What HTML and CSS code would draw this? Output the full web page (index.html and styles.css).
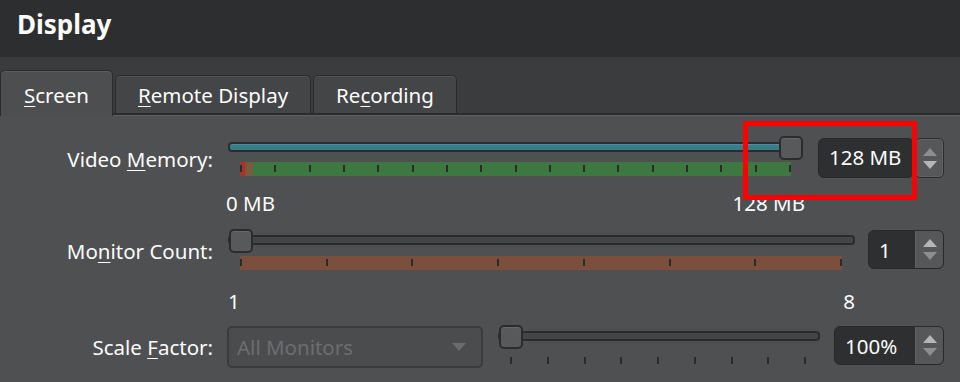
FILE: index.html
```html
<!DOCTYPE html>
<html lang="en">
<head>
    <meta charset="UTF-8">
    <title>Display</title>
    <link rel="stylesheet" href="styles.css">
</head>
<body>
    <div class="header">
        <h1 class="title">Display</h1>
    </div>

    <div class="tabbar">
        <div class="tab tab-active"><u>S</u>creen</div>
        <div class="tab"><u>R</u>emote Display</div>
        <div class="tab">Re<u>c</u>ording</div>
    </div>

    <div class="panel">
        <div class="row row-memory">
            <label class="field-label">Video <u>M</u>emory:</label>
            <div class="slider">
                <div class="groove groove-filled"></div>
                <div class="handle handle-max"></div>
                <div class="scale scale-memory">
                    <span class="tick"></span><span class="tick"></span><span class="tick"></span>
                    <span class="tick"></span><span class="tick"></span><span class="tick"></span>
                    <span class="tick"></span><span class="tick"></span><span class="tick"></span>
                    <span class="tick"></span><span class="tick"></span><span class="tick"></span>
                    <span class="tick"></span><span class="tick"></span><span class="tick"></span>
                    <span class="tick"></span><span class="tick"></span>
                </div>
            </div>
            <div class="spin spin-memory">
                <div class="spin-value">128 MB</div>
                <div class="spin-buttons spin-buttons-split">
                    <span class="arrow-up arrow-off"></span>
                    <span class="arrow-down"></span>
                </div>
            </div>
            <div class="highlight"></div>
        </div>
        <div class="range range-memory"><span>0 MB</span><span>128 MB</span></div>

        <div class="row row-monitors">
            <label class="field-label">Mo<u>n</u>itor Count:</label>
            <div class="slider">
                <div class="groove"></div>
                <div class="handle"></div>
                <div class="scale scale-monitors">
                    <span class="tick"></span><span class="tick"></span><span class="tick"></span>
                    <span class="tick"></span><span class="tick"></span><span class="tick"></span>
                    <span class="tick"></span><span class="tick"></span>
                </div>
            </div>
            <div class="spin spin-monitors">
                <div class="spin-value">1</div>
                <div class="spin-buttons">
                    <span class="arrow-up"></span>
                    <span class="arrow-down arrow-off"></span>
                </div>
            </div>
        </div>
        <div class="range range-monitors"><span>1</span><span>8</span></div>

        <div class="row row-scale">
            <label class="field-label">Scale <u>F</u>actor:</label>
            <div class="combo">
                <span>All Monitors</span>
                <span class="combo-arrow"></span>
            </div>
            <div class="slider slider-scale">
                <div class="groove"></div>
                <div class="handle"></div>
                <div class="scale scale-plain">
                    <span class="tick"></span><span class="tick"></span><span class="tick"></span>
                    <span class="tick"></span><span class="tick"></span><span class="tick"></span>
                    <span class="tick"></span><span class="tick"></span><span class="tick"></span>
                </div>
            </div>
            <div class="spin spin-scale">
                <div class="spin-value">100%</div>
                <div class="spin-buttons">
                    <span class="arrow-up"></span>
                    <span class="arrow-down arrow-off"></span>
                </div>
            </div>
        </div>
    </div>
</body>
</html>
```

FILE: styles.css
```css
body {
    margin: 0;
    font-family: "Noto Sans", "Open Sans", sans-serif;
    font-size: 20.5px;
    color: #fcfcfc;
    background-color: #4f5052;
    overflow: hidden;
}

u { text-decoration-thickness: 1px; text-underline-offset: 3px; }

.header {
    height: 57px;
    box-sizing: border-box;
    padding: 7px 17px 0;
    background-color: #2d2e30;
}

.title {
    margin: 0;
    font-size: 26px;
    line-height: 34px;
    font-weight: bold;
}

/* Tabs */
.tabbar {
    height: 56px;
    display: flex;
    align-items: flex-end;
    gap: 2px;
    background-color: #3b3c3e;
}

.tab {
    height: 38px;
    box-sizing: border-box;
    padding: 2px 22px 0;
    line-height: 34px;
    background-color: #444547;
    border: 1px solid #2a2b2d;
    border-bottom: none;
    border-radius: 5px 5px 0 0;
    box-shadow: inset 0 1px 0 #525355;
}

.tab-active {
    height: 46px;
    padding: 7px 23px 0;
    margin-bottom: -3px;
    position: relative;
    z-index: 1;
    background-color: #4d4e50;
    box-shadow: inset 0 1px 0 #5b5c5e;
}

/* Panel */
.panel {
    border-top: 2px solid #2b2c2e;
    border-left: 1px solid #5a5b5d;
    box-shadow: inset 0 1px 0 #5f6062;
    padding: 21px 16px 20px 0;
    margin-left: -1px;
}

.row {
    display: flex;
    align-items: flex-start;
    position: relative;
}

.field-label {
    width: 213px;
    flex: none;
    text-align: right;
    line-height: 28px;
    margin-right: 15px;
}

.row-memory .field-label { margin-top: 9px; }
.row-monitors .field-label { margin-top: 8px; }
.row-scale .field-label { margin-top: 8px; }

/* Sliders */
.slider {
    flex: 1;
    position: relative;
    height: 40px;
}

.groove {
    margin-top: 6px;
    height: 10px;
    box-sizing: border-box;
    border: 2px solid #2b2c2e;
    border-radius: 4px;
    background-color: #444547;
}

.groove-filled {
    background-color: #3a7c88;
    box-shadow: inset 0 1px 0 #4b919c;
}

.handle {
    position: absolute;
    top: 0;
    left: 1px;
    width: 24px;
    height: 24px;
    box-sizing: border-box;
    border: 2px solid #2b2c2e;
    border-radius: 5px;
    background-color: #58595b;
    box-shadow: inset 0 1px 0 #67686a;
}

.handle-max { left: auto; right: 0; }

.scale {
    margin: 10px 12px 0;
    height: 14px;
    display: flex;
    justify-content: space-between;
}

.tick {
    width: 2px;
    height: 7px;
    margin-top: 3px;
    background-color: #2a2b2d;
}

.scale-memory {
    background: linear-gradient(to right, #a3362a 0, #a3362a 5px, #7d5a3e 6px, #7d5a3e 12px, #3c783f 13px);
}

.scale-monitors {
    margin-top: 11px;
    margin-right: 13px;
    background-color: #7b4f3c;
}

.scale-plain { margin-top: 13px; margin-right: 14px; }

.slider-scale { margin-left: 15px; }

/* Spin boxes */
.spin {
    flex: none;
    display: flex;
    height: 40px;
    box-sizing: border-box;
    margin-top: 2px;
    background-color: #2e2f31;
    border: 1px solid #28292b;
    border-radius: 6px;
}

.spin-value {
    flex: 1;
    padding-left: 10px;
    line-height: 38px;
}

.spin-buttons {
    width: 27px;
    display: flex;
    flex-direction: column;
    align-items: center;
    justify-content: center;
    gap: 5px;
    background-color: #565759;
    border-left: 1px solid #606163;
    border-radius: 0 5px 5px 0;
}

.spin-memory {
    width: 126px;
    margin-left: 15px;
    background: none;
    border: none;
    gap: 1px;
}

.spin-memory .spin-value {
    background-color: #2e2f31;
    border: 1px solid #28292b;
    border-radius: 6px;
    line-height: 36px;
}

.spin-buttons-split {
    border: 1px solid #2b2c2e;
    border-radius: 5px;
    box-shadow: inset 0 0 0 1px #626365;
}

.spin-monitors { width: 76px; margin-left: 13px; margin-top: 1px; height: 39px; }
.spin-scale { width: 110px; margin-left: 14px; margin-top: 1px; height: 39px; }

.arrow-up, .arrow-down {
    width: 0;
    height: 0;
    border-left: 7px solid transparent;
    border-right: 7px solid transparent;
}

.arrow-up { border-bottom: 8px solid #b4b5b7; }
.arrow-down { border-top: 8px solid #b4b5b7; }
.arrow-up.arrow-off { border-bottom-color: #8d8e90; }
.arrow-down.arrow-off { border-top-color: #8d8e90; }

/* Range labels under sliders */
.range {
    display: flex;
    justify-content: space-between;
    line-height: 24px;
}

.range-memory { margin: 13px 139px 14px 226px; }
.range-monitors { margin: 20px 89px 12px 228px; }

/* Disabled combo */
.combo {
    flex: none;
    width: 256px;
    height: 42px;
    box-sizing: border-box;
    margin-top: 1px;
    margin-left: -1px;
    padding: 0 15px 0 8px;
    display: flex;
    align-items: center;
    justify-content: space-between;
    color: #6d6e70;
    background-color: #4b4c4e;
    border: 2px solid #3a3b3d;
    border-radius: 5px;
}

.combo-arrow {
    width: 0;
    height: 0;
    border-left: 7px solid transparent;
    border-right: 7px solid transparent;
    border-top: 8px solid #6a6b6d;
}

/* Red annotation box */
.highlight {
    position: absolute;
    left: 743px;
    top: -15px;
    width: 174px;
    height: 79px;
    box-sizing: border-box;
    border: 5px solid #ff0000;
}
```
